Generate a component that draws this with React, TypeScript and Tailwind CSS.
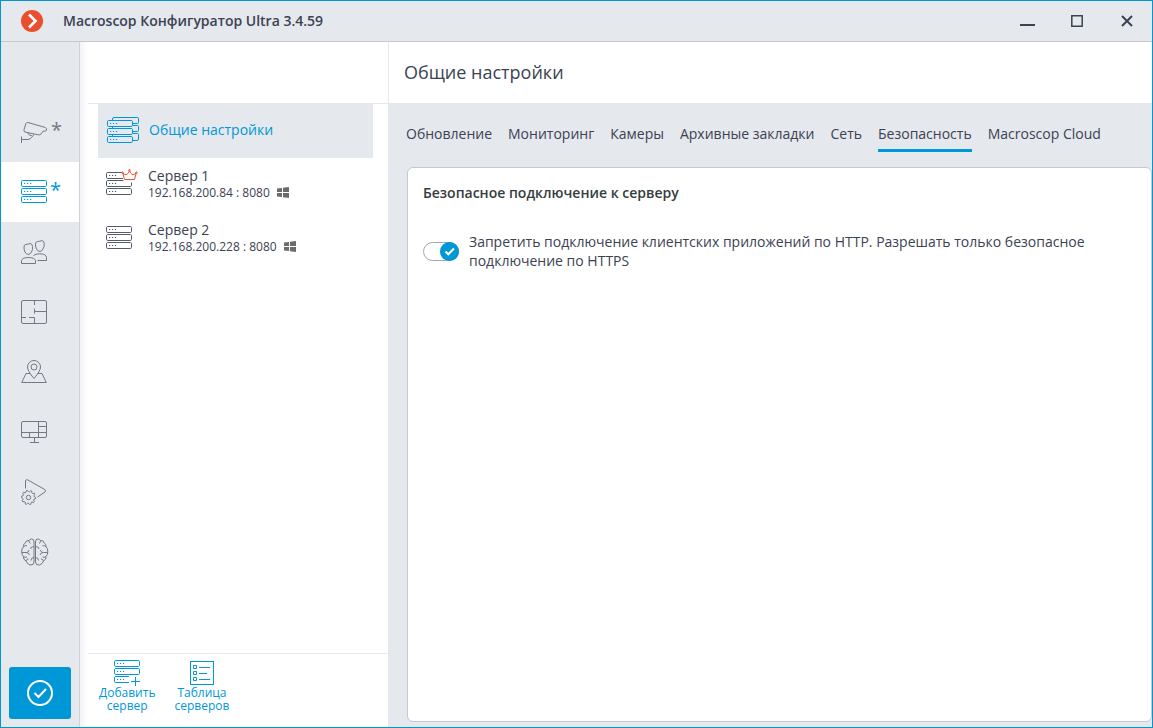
import React, { useState } from "react";

const ServerRows = ({ y = 0 }: { y?: number }) => (
  <>
    {[0, 8, 16].map((row) => (
      <g key={row}>
        <rect x="0.5" y={y + row + 0.5} width="25" height="6" rx="1.2" />
        <path d={`M3 ${y + row + 3.5}h1.2m1.8 0h1.2m1.8 0h1.2`} />
      </g>
    ))}
  </>
);

const ServersIcon = () => (
  <svg width="26" height="24" viewBox="0 0 26 24" fill="none" stroke="currentColor">
    <ServerRows />
  </svg>
);

const ServerStackIcon = () => (
  <svg width="32" height="27" viewBox="0 0 32 27" fill="none" stroke="currentColor">
    <path d="M5.5 3V2Q5.5.5 7 .5H30.5Q31.5.5 31.5 1.5V5.5Q31.5 6.5 30.5 6.5H26M26 8.5H30.5Q31.5 8.5 31.5 9.500V13.5Q31.5 14.5 30.5 14.5H26M26 16.5H30.5Q31.5 16.5 31.5 17.5V22Q31.5 23.5 30 23.5H26" />
    <path d="M5.5 10v2M5.5 18v2" />
    <ServerRows y={3} />
  </svg>
);

const MainServerIcon = () => (
  <svg width="32" height="27" viewBox="0 0 32 27" fill="none" stroke="currentColor">
    <path d="M16 3.5H1.7Q.5 3.5.5 4.700V8.300Q.5 9.500 1.7 9.500H17" />
    <path d="M17.500 11.500H1.700Q.5 11.500.5 12.700V16.300Q.5 17.500 1.700 17.500H24.300Q25.500 17.500 25.500 16.300V13.500" />
    <rect x="0.5" y="19.5" width="25" height="6" rx="1.2" />
    <path d="M3 6.5h1.2m1.8 0h1.2m1.8 0h1.2M3 14.5h1.2m1.8 0h1.2m1.8 0h1.2M3 22.5h1.2m1.8 0h1.2m1.8 0h1.2" />
    <g stroke="#e94f35">
      <path d="M18.5 10.500 16.8 4.200Q19 6.200 20.800 5.500Q22.500 4.500 23.500 1.800Q24.500 4.500 26.200 5.500Q28 6.200 30.200 4.200L28.500 10.500Z" />
      <circle cx="16.5" cy="3.6" r="0.8" />
      <circle cx="23.5" cy="1.3" r="0.8" />
      <circle cx="30.5" cy="3.6" r="0.8" />
    </g>
  </svg>
);

const CameraIcon = () => (
  <svg width="27" height="22" viewBox="0 0 27 22" fill="none" stroke="currentColor" strokeLinejoin="round">
    <path d="M4 11Q2.600 10.500 3 8.700L4.900 2.500Q5.500 1.200 7 1.500L24.300 6.500Q26.300 7.500 25.300 9.500Q24.500 10.500 22 10.200Q20.500 13.500 18.500 13.800L16.500 13.700Z" />
    <path d="M.5 15.500v6.500M.5 18.500H7Q9.500 18 10.500 16.500L13 13.500M6.800 12Q8 15 10.800 14.500" />
  </svg>
);

const UsersIcon = () => (
  <svg width="26" height="24" viewBox="0 0 26 24" fill="none" stroke="currentColor" strokeLinejoin="round">
    <path d="M3 8Q2.500 4.800 5 4.300Q7.500 4.300 9 3.500Q11.500 3.800 11.500 6.500Q12 9.500 10.500 12Q9 14.500 7.300 14.500Q5.500 14.500 4 12Q3 10 3 8Z" />
    <path d="M.5 23.500V20.500Q1.500 17.500 7.500 17.500T14.500 20.500V23.500Z" />
    <path d="M14.500 5Q14 1.800 16.500 1.500Q19 1.500 21 .6Q23.200 1 23.200 3.500Q23.500 6.500 22 9Q20.500 11.500 19 11.500Q17 11.500 15.500 9Q14.500 7 14.500 5ZM12.500 15.500Q14.500 13.800 18.500 13.800Q25.500 13.800 25.500 17.500V20.500H16.500" />
  </svg>
);

const PlanIcon = () => (
  <svg width="26" height="24" viewBox="0 0 26 24" fill="none" stroke="currentColor">
    <rect x="0.5" y="0.5" width="25" height="23" rx="1.5" />
    <path d="M13.5 1v4M13.5 8.500v5M13.5 11.5H25M1 17.5h4M8 17.5h5.500V23" />
  </svg>
);

const MapIcon = () => (
  <svg width="26" height="24" viewBox="0 0 26 24" fill="none" stroke="currentColor" strokeLinejoin="round">
    <path d="M13 18.500Q6.500 11 6.500 7A6.500 6.500 0 0 1 19.500 7Q19.500 11 13 18.500Z" />
    <circle cx="13" cy="7" r="3" />
    <path d="M9 13.500H5L.7 22.500H25.300L21 13.500H17" />
  </svg>
);

const MonitorIcon = () => (
  <svg width="26" height="22" viewBox="0 0 26 22" fill="none" stroke="currentColor">
    <rect x="0.5" y="0.5" width="25" height="16" rx="1.5" />
    <path d="M17.5 1v15.500M17.5 5.500H25M1 11.500H25M8.500 11.500v5M13.500 16.500v5M9 21.500h9" />
  </svg>
);

// points of a ten-tooth cog, four per tooth
const cog = Array.from({ length: 40 }, (_, i) => {
  const radius = i % 4 < 2 ? 7.2 : 5.7;
  const angle = (i * Math.PI) / 20;
  return `${(7.5 + radius * Math.cos(angle)).toFixed(2)},${(18.5 + radius * Math.sin(angle)).toFixed(2)}`;
}).join(" ");

const ScenarioIcon = () => (
  <svg width="26" height="26" viewBox="0 0 26 26" fill="none" stroke="currentColor" strokeLinejoin="round">
    <path d="M4.500 9.500V2Q4.800.2 6.500.8L23.800 10.500Q25.300 12 23.800 13.200L16.500 18" />
    <circle cx="7.5" cy="18.5" r="2.2" />
    <polygon points={cog} />
  </svg>
);

const BrainIcon = () => {
  const half =
    "M13 4Q13 1 10.800 1T8 2.600Q5 2 4.300 5Q2 6 2.500 8.800Q.5 10 .7 14Q.8 17 2.500 18.500Q2 21.500 5 23Q6 26 9 27Q13 27.500 13 24ZM8 2.600Q7.800 4.800 9.500 5.300M2.500 8.800Q4 7 6 7.800M13 8.800H11.500Q9.800 9 9.500 11M1 14.500H5Q8 14.500 8.500 17M5.800 14.500Q7.800 14 8 12M2.500 18.500Q4 20 6 19M5 23Q5.500 21 7.500 21M13 19.500Q10 19.500 10 22.500";
  return (
    <svg width="28" height="28" viewBox="0 0 28 28" fill="none" stroke="currentColor">
      <path d={half} />
      <path d={half} transform="matrix(-1 0 0 1 27.5 0)" />
    </svg>
  );
};

const AddServerIcon = () => (
  <svg width="26" height="26" viewBox="0 0 26 26" fill="none" stroke="currentColor">
    <rect x="0.5" y="0.5" width="25" height="6" rx="1.2" />
    <rect x="0.5" y="8.5" width="25" height="6" rx="1.2" />
    <path d="M15 16.5H1.700Q.5 16.5.5 17.700V21.300Q.5 22.5 1.700 22.5H15M17 21.500h9M21.500 17v9" />
    <path d="M3 3.500h1.200m1.800 0h1.200m1.800 0h1.200M3 11.500h1.200m1.800 0h1.200m1.800 0h1.200M3 19.500h1.200m1.800 0h1.200m1.800 0h1.200" />
  </svg>
);

const TableIcon = () => (
  <svg width="24" height="26" viewBox="0 0 24 26" fill="none" stroke="currentColor">
    <rect x="0.5" y="1.5" width="23" height="23" />
    <path d="M3.500 5.500h3v3h-3ZM3.500 11.500h3v3h-3ZM3.500 17.500h3v3h-3ZM9 7.500h11M9 13.500h8M9 19.500h11" />
  </svg>
);

const WindowsIcon = () => (
  <svg width="12" height="12" viewBox="0 0 12 12" fill="#6b6b6b">
    <path d="M0 1.500 5 .9V5H0ZM6 .7 12 0v5H6ZM0 6h5v4.100L0 9.500ZM6 6h6v5l-6-.8Z" />
  </svg>
);

const sections = [
  { label: "Камеры", icon: <CameraIcon />, changed: true },
  { label: "Серверы", icon: <ServersIcon />, changed: true },
  { label: "Пользователи", icon: <UsersIcon /> },
  { label: "Планы", icon: <PlanIcon /> },
  { label: "Карты", icon: <MapIcon /> },
  { label: "Мониторы", icon: <MonitorIcon /> },
  { label: "Сценарии", icon: <ScenarioIcon /> },
  { label: "Аналитика", icon: <BrainIcon /> },
];

const servers = [
  { name: "Сервер 1", address: "192.168.200.84 : 8080", main: true },
  { name: "Сервер 2", address: "192.168.200.228 : 8080", main: false },
];

const tabs = [
  "Обновление",
  "Мониторинг",
  "Камеры",
  "Архивные закладки",
  "Сеть",
  "Безопасность",
  "Macroscop Cloud",
];

const TitleBar = () => (
  <header className="flex h-[41px] shrink-0 items-center border-b border-[#c5c8d0] bg-[#e5e8ed] pl-5">
    <svg width="22" height="22" viewBox="0 0 22 22" fill="none">
      <circle cx="11" cy="11" r="11" fill="#e94e2f" />
      <path d="M8 4.500 14.500 11 8 17.500" stroke="white" strokeWidth="2.6" />
    </svg>
    <h1 className="ml-5 flex-1 text-sm font-semibold">Macroscop Конфигуратор Ultra 3.4.59</h1>
    <button aria-label="Свернуть" className="flex h-full w-[50px] items-center justify-center">
      <svg width="15" height="12" viewBox="0 0 15 12" fill="currentColor">
        <path d="M0 9h15v2H0Z" />
      </svg>
    </button>
    <button aria-label="Развернуть" className="flex h-full w-[50px] items-center justify-center">
      <svg width="12" height="12" viewBox="0 0 12 12" fill="none" stroke="currentColor" strokeWidth="1.5">
        <path d="M.8.8h10.400v10.400H.8Z" />
      </svg>
    </button>
    <button aria-label="Закрыть" className="flex h-full w-[50px] items-center justify-center">
      <svg width="12" height="12" viewBox="0 0 12 12" fill="none" stroke="currentColor" strokeWidth="2">
        <path d="M1 1 11 11M11 1 1 11" />
      </svg>
    </button>
  </header>
);

const Sidebar = () => {
  const [active, setActive] = useState("Серверы");
  return (
    <nav className="flex w-[79px] shrink-0 flex-col border-r border-[#cfd2da] bg-[#e5e8ed] pt-[60px] text-[#747886]">
      {sections.map((s) => (
        <button
          key={s.label}
          aria-label={s.label}
          onClick={() => setActive(s.label)}
          className={`flex h-[60px] items-center gap-[3px] pl-5 ${active === s.label ? "bg-white text-[#0097d6]" : ""}`}
        >
          {s.icon}
          {s.changed && <span className="pb-1 text-xl leading-5 font-medium">*</span>}
        </button>
      ))}
      <button
        aria-label="Применить"
        className="mx-2 mt-auto mb-2 flex h-[52px] items-center justify-center rounded-[3px] bg-[#0097d6] text-white"
      >
        <svg width="26" height="26" viewBox="0 0 26 26" fill="none" stroke="currentColor" strokeWidth="2">
          <circle cx="13" cy="13" r="12" />
          <path d="M7.500 13 11.500 17 19 9" />
        </svg>
      </button>
    </nav>
  );
};

const ServerList = () => (
  <aside className="flex w-[308px] shrink-0 flex-col bg-linear-to-r from-[#f1f3f6] to-white to-[8px] pl-2">
    <div className="h-[62px] shrink-0 border-b border-[#e5e8ed]"></div>
    <div className="flex-1 pr-[15px] pl-[10px]">
      <button className="flex h-[54px] w-full items-center bg-[#e5e8ed] pb-[2px] pl-[9px] text-sm text-[#0097d6]">
        <ServerStackIcon />
        <span className="ml-[10px]">Общие настройки</span>
      </button>
      {servers.map((s) => (
        <button key={s.name} className="flex h-[54px] w-full items-start pt-[9px] pl-2 text-left">
          <span className="flex h-[29px] w-[42px] items-end text-[#555b6a]">
            {s.main ? <MainServerIcon /> : <ServersIcon />}
          </span>
          <span>
            <span className="block text-sm leading-[18px]">{s.name}</span>
            <span className="flex items-center gap-[7px] text-xs leading-4">
              {s.address}
              <WindowsIcon />
            </span>
          </span>
        </button>
      ))}
    </div>
    <div className="flex h-[74px] shrink-0 gap-[19px] border-t border-[#e5e8ed] pt-[6px] pl-[11px] text-xs leading-[13px] text-[#0097d6]">
      <button className="flex flex-col items-center">
        <AddServerIcon />
        <span>
          Добавить
          <br />
          сервер
        </span>
      </button>
      <button className="flex flex-col items-center">
        <TableIcon />
        <span>
          Таблица
          <br />
          серверов
        </span>
      </button>
    </div>
  </aside>
);

const Settings = () => {
  const [tab, setTab] = useState("Безопасность");
  const [httpsOnly, setHttpsOnly] = useState(true);
  return (
    <main className="flex min-w-0 flex-1 flex-col bg-[#e5e8ed]">
      <h2 className="flex h-[61px] shrink-0 items-center border-l border-[#e5e8ed] bg-white pb-[2px] pl-[15px] text-lg">
        Общие настройки
      </h2>
      <div className="flex gap-4 pt-5 pb-[15px] pl-[18px]">
        {tabs.map((t) => (
          <button
            key={t}
            onClick={() => setTab(t)}
            className={`h-[29px] border-b-[3px] pb-[5px] text-sm whitespace-nowrap ${
              tab === t ? "border-[#0097d6]" : "border-transparent"
            }`}
          >
            {t}
          </button>
        ))}
      </div>
      <section className="mb-[5px] ml-[19px] flex-1 rounded-md border border-[#c5c8d0] bg-white p-[15px]">
        <h3 className="text-sm font-semibold text-[#343d3d]">Безопасное подключение к серверу</h3>
        <label className="mt-[29px] flex items-center gap-[10px] text-sm leading-[19px]">
          <input
            type="checkbox"
            checked={httpsOnly}
            onChange={(e) => setHttpsOnly(e.target.checked)}
            className="peer sr-only"
          />
          <span className="flex h-[19px] w-9 shrink-0 items-center justify-start rounded-full border border-[#a4a7b1] peer-checked:justify-end">
            <svg className="-m-px" width="19" height="19" viewBox="0 0 19 19" fill="none">
              <circle cx="9.5" cy="9.5" r="9.5" fill="#0097d6" />
              <path d="M5.500 9.500 8.300 12.300 14 6.500" stroke="white" strokeWidth="2" />
            </svg>
          </span>
          <span className="max-w-[640px]">
            Запретить подключение клиентских приложений по HTTP. Разрешать только безопасное
            подключение по HTTPS
          </span>
        </label>
      </section>
    </main>
  );
};

const App = () => {
  return (
    <div className="flex h-screen flex-col border border-[#0097d6] bg-white font-['Open_Sans','Noto_Sans',sans-serif] text-[#3b4252]">
      <TitleBar />
      <div className="flex min-h-0 flex-1">
        <Sidebar />
        <ServerList />
        <Settings />
      </div>
    </div>
  );
};

export default App;
